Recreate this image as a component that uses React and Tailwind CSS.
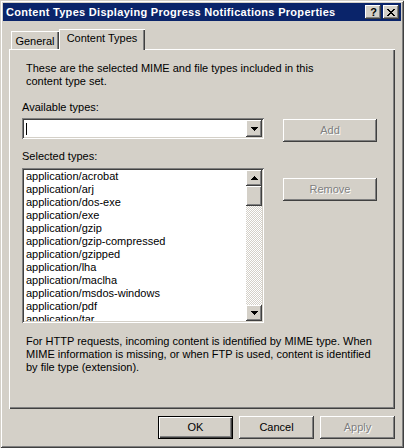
import React from 'react'

const raised = 'bg-[#d4d0c8] shadow-[inset_-1px_-1px_#404040,inset_1px_1px_#fff,inset_-2px_-2px_#808080]'
const sunken = 'shadow-[inset_1px_1px_#808080,inset_-1px_-1px_#fff,inset_2px_2px_#404040,inset_-2px_-2px_#d4d0c8]'

const items = [
  'application/acrobat',
  'application/arj',
  'application/dos-exe',
  'application/exe',
  'application/gzip',
  'application/gzip-compressed',
  'application/gzipped',
  'application/lha',
  'application/maclha',
  'application/msdos-windows',
  'application/pdf',
  'application/tar',
]

const ArrowUp = () => (
  <svg width="7" height="4" viewBox="0 0 7 4" shapeRendering="crispEdges">
    <rect x="3" y="0" width="1" height="1" fill="#000" />
    <rect x="2" y="1" width="3" height="1" fill="#000" />
    <rect x="1" y="2" width="5" height="1" fill="#000" />
    <rect x="0" y="3" width="7" height="1" fill="#000" />
  </svg>
)

const ArrowDown = () => (
  <svg width="7" height="4" viewBox="0 0 7 4" shapeRendering="crispEdges">
    <rect x="0" y="0" width="7" height="1" fill="#000" />
    <rect x="1" y="1" width="5" height="1" fill="#000" />
    <rect x="2" y="2" width="3" height="1" fill="#000" />
    <rect x="3" y="3" width="1" height="1" fill="#000" />
  </svg>
)

const CloseGlyph = () => (
  <svg width="8" height="7" viewBox="0 0 8 7" shapeRendering="crispEdges">
    <rect x="0" y="0" width="2" height="1" fill="#000" />
    <rect x="6" y="0" width="2" height="1" fill="#000" />
    <rect x="1" y="1" width="2" height="1" fill="#000" />
    <rect x="5" y="1" width="2" height="1" fill="#000" />
    <rect x="2" y="2" width="4" height="1" fill="#000" />
    <rect x="3" y="3" width="2" height="1" fill="#000" />
    <rect x="2" y="4" width="4" height="1" fill="#000" />
    <rect x="1" y="5" width="2" height="1" fill="#000" />
    <rect x="5" y="5" width="2" height="1" fill="#000" />
    <rect x="0" y="6" width="2" height="1" fill="#000" />
    <rect x="6" y="6" width="2" height="1" fill="#000" />
  </svg>
)

const DisabledButton = ({ label, className = '' }) => (
  <div className={`${raised} flex items-center justify-center text-[#808080] [text-shadow:1px_1px_#fff] ${className}`}>
    {label}
  </div>
)

export default function App() {
  return (
    <div className="w-[404px] h-[448px] bg-[#d4d0c8] p-[3px] flex flex-col font-['Liberation_Sans',Arial,sans-serif] text-[11px] leading-[13px] text-black shadow-[inset_1px_1px_#d4d0c8,inset_-1px_-1px_#404040,inset_2px_2px_#fff,inset_-2px_-2px_#808080] overflow-hidden">
      {/* Title bar */}
      <div className="h-[18px] bg-[#0a246a] flex items-center pl-[3px] pr-[2px]">
        <div className="flex-1 text-white font-bold text-[11px] tracking-[0.3px] whitespace-nowrap">
          Content Types Displaying Progress Notifications Properties
        </div>
        <div className={`${raised} w-[16px] h-[14px] flex items-center justify-center font-bold text-[11px] leading-none pl-px`}>?</div>
        <div className={`${raised} w-[16px] h-[14px] ml-[2px] flex items-center justify-center`}>
          <CloseGlyph />
        </div>
      </div>

      {/* Tabs */}
      <div className="mt-[8px] h-[20px] flex items-end pl-[8px]">
        <div className="h-[18px] w-[48px] pt-[4px] text-center shadow-[inset_1px_1px_#fff,inset_-1px_0_#404040,inset_-2px_0_#808080]">
          General
        </div>
        <div className="relative z-10 h-[21px] -mb-px w-[86px] pt-[3px] text-center bg-[#d4d0c8] shadow-[inset_1px_1px_#fff,inset_-1px_0_#404040,inset_-2px_0_#808080]">
          Content Types
        </div>
      </div>

      {/* Panel */}
      <div className="mx-[6px] h-[360px] pt-[13px] shadow-[inset_1px_1px_#fff,inset_-1px_-1px_#404040,inset_-2px_-2px_#808080]">
        <p className="pl-[17px] whitespace-nowrap">
          These are the selected MIME and file types included in this
          <br />
          content type set.
        </p>

        <div className="mt-[13px] pl-[13px] flex">
          <div className="w-[242px] flex flex-col">
            <div className="h-[13px]">Available types:</div>
            <div className={`mt-[4px] h-[21px] bg-white ${sunken} p-[2px] flex`}>
              <div className="flex-1 flex items-center pl-[2px]">
                <div className="w-px h-[12px] bg-black" />
              </div>
              <div className={`${raised} w-[16px] h-[17px] flex items-center justify-center`}>
                <ArrowDown />
              </div>
            </div>
            <div className="mt-[11px] h-[13px]">Selected types:</div>
            <div className={`mt-[5px] h-[155px] bg-white ${sunken} p-[2px] flex`}>
              <div className="flex-1 overflow-hidden pl-[2px]">
                {items.map((item) => (
                  <div key={item} className="h-[13px] whitespace-nowrap">{item}</div>
                ))}
              </div>
              <div className="w-[16px] flex flex-col">
                <div className={`${raised} h-[16px] flex items-center justify-center`}>
                  <ArrowUp />
                </div>
                <div className={`${raised} h-[20px]`} />
                <div className="flex-1 [background:repeating-conic-gradient(#d4d0c8_0_25%,#fff_0_50%)_0_0/2px_2px]" />
                <div className={`${raised} h-[16px] flex items-center justify-center`}>
                  <ArrowDown />
                </div>
              </div>
            </div>
          </div>

          <div className="ml-[19px] w-[94px] flex flex-col">
            <DisabledButton label="Add" className="mt-[18px] h-[23px]" />
            <DisabledButton label="Remove" className="mt-[36px] h-[23px]" />
          </div>
        </div>

        <p className="mt-[12px] pl-[17px] whitespace-nowrap">
          For HTTP requests, incoming content is identified by MIME type. When
          <br />
          MIME information is missing, or when FTP is used, content is identified
          <br />
          by file type (extension).
        </p>
      </div>

      {/* Dialog buttons */}
      <div className="mt-[7px] flex justify-end gap-[6px] pr-[6px]">
        <div className="w-[75px] h-[23px] bg-[#d4d0c8] flex items-center justify-center shadow-[inset_0_0_0_1px_#000,inset_2px_2px_#fff,inset_-2px_-2px_#404040,inset_-3px_-3px_#808080]">
          OK
        </div>
        <div className={`${raised} w-[75px] h-[23px] flex items-center justify-center`}>Cancel</div>
        <DisabledButton label="Apply" className="w-[75px] h-[23px]" />
      </div>
    </div>
  )
}
